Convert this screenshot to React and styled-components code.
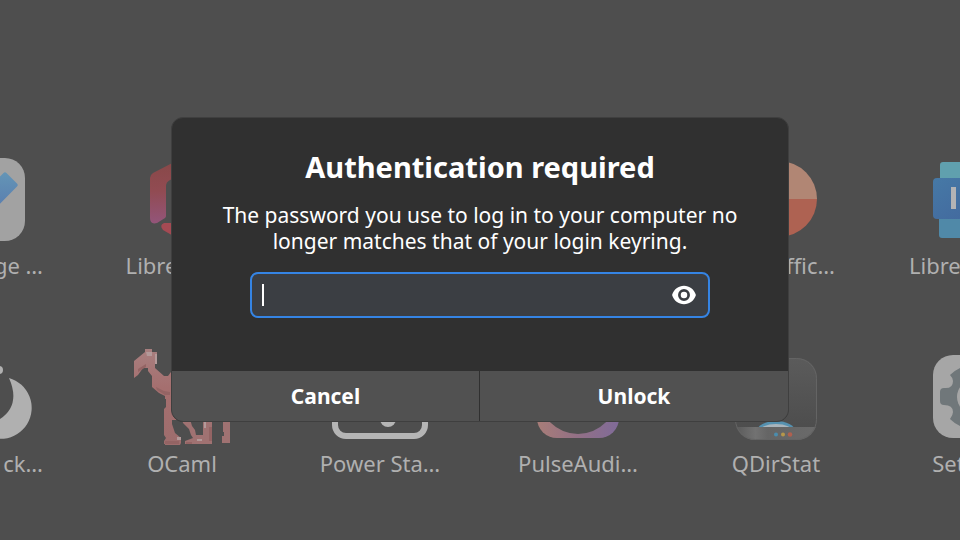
import React from "react";
import styled, { createGlobalStyle } from "styled-components";

const GlobalStyle = createGlobalStyle`
  *, *::before, *::after { box-sizing: border-box; }
  body {
    margin: 0;
    background: #4e4e4e;
    font-family: "Noto Sans", "Open Sans", sans-serif;
  }
`;

const Desktop = styled.main`
  display: grid;
  grid-template: minmax(100vh, auto) / minmax(0, 1fr);
  height: 100vh;
  overflow: hidden;
`;

const AppGrid = styled.section`
  grid-area: 1 / 1;
  display: grid;
  grid-template-columns: repeat(6, 198px);
  grid-auto-rows: 198px;
  justify-content: center;
  align-content: end;
  padding-right: 2px;
  margin-bottom: -7px;
`;

const AppTile = styled.a`
  display: flex;
  flex-direction: column;
  align-items: center;
  gap: 5px;
  color: #b0b0b0;
  text-decoration: none;
`;

const AppIcon = styled.svg`
  flex: none;
  width: 96px;
  height: 96px;
`;

const AppLabel = styled.span`
  align-self: ${(p) => (p.$align === "end" ? "stretch" : "center")};
  padding: 0 ${(p) => (p.$align === "end" ? 40 : 0)}px;
  text-align: ${(p) => p.$align || "center"};
  font-size: 22px;
  line-height: 26px;
  white-space: nowrap;
`;

const Overlay = styled.div`
  grid-area: 1 / 1;
  z-index: 1;
  display: flex;
  align-items: center;
  justify-content: center;
  padding-bottom: 1px;
`;

const Dialog = styled.form`
  width: 618px;
  max-width: 100%;
  border: 1px solid #3f3f3f;
  border-radius: 12px;
  overflow: hidden;
  background: #303030;
  color: #fff;
`;

const DialogBody = styled.div`
  display: flex;
  flex-direction: column;
  align-items: center;
  padding: 30px 48px 53px;
`;

const Title = styled.h1`
  margin: 0;
  font-size: 29px;
  font-weight: 700;
  line-height: 38px;
`;

const Message = styled.label`
  margin-top: 16px;
  font-size: 21px;
  line-height: 26px;
  text-align: center;
  text-wrap: balance;
  white-space: pre-line;
`;

const PasswordField = styled.div`
  display: flex;
  align-items: center;
  width: 460px;
  max-width: 100%;
  height: 46px;
  margin-top: 18px;
  padding: 0 11px 0 10px;
  border: 2px solid #3584e4;
  border-radius: 8px;
  background: #3b3e43;
`;

const Caret = styled.span`
  flex: none;
  width: 2px;
  height: 22px;
  background: #fff;
`;

const PasswordInput = styled.input`
  flex: 1;
  min-width: 0;
  padding: 0;
  border: 0;
  outline: 0;
  background: transparent;
  color: inherit;
  caret-color: transparent;
  font: inherit;
  font-size: 21px;
`;

const RevealButton = styled.button`
  display: flex;
  padding: 0;
  border: 0;
  background: transparent;
  color: inherit;
`;

const Actions = styled.div`
  display: grid;
  grid-template-columns: 1fr 1fr;
`;

const ActionButton = styled.button`
  height: 50px;
  padding: 0;
  border: 0;
  background: #515151;
  color: inherit;
  font: inherit;
  font-size: 21px;
  font-weight: 700;

  &:first-child { border-right: 1px solid #303030; }
`;

const EditorIcon = () => (
  <AppIcon viewBox="0 0 96 96" aria-hidden="true">
    <defs>
      <linearGradient id="pen" x1="0" y1="0" x2="0" y2="1">
        <stop offset="0" stopColor="#6495b6" />
        <stop offset="1" stopColor="#5779ae" />
      </linearGradient>
    </defs>
    <rect x="7" y="7" width="82" height="83" rx="20" fill="#a2a2a2" />
    <path d="M67.500 22q1.500-1.500 3 0l10.500 10.500q1.500 1.500 0 3L53 64 39 50Z" fill="url(#pen)" />
  </AppIcon>
);

const HexIcon = () => (
  <AppIcon viewBox="0 0 96 96" aria-hidden="true">
    <defs>
      <linearGradient id="hex" x1="0" y1="0" x2="0" y2="1">
        <stop offset="0" stopColor="#874847" />
        <stop offset=".5" stopColor="#914b52" />
        <stop offset="1" stopColor="#93557a" />
      </linearGradient>
    </defs>
    <path d="M16 27q0-3 3-5L48 7v17l-12 5q-4 2-4 6v30q0 1-1 2l-8 5q-7 2-7-5Z" fill="url(#hex)" />
    <path d="M30 72h18v18L29 79q-4-5 1-7Z" fill="#a44a53" />
  </AppIcon>
);

const PieIcon = () => (
  <AppIcon viewBox="0 0 96 96" aria-hidden="true">
    <path d="M13 48a38 38 0 0 1 76 0Z" fill="#b18674" />
    <path d="M13 48a38 38 0 0 0 76 0Z" fill="#ae6252" />
  </AppIcon>
);

const LayersIcon = () => (
  <AppIcon viewBox="0 0 96 96" aria-hidden="true">
    <defs>
      <linearGradient id="card" x1="0" y1="0" x2="1" y2="1">
        <stop offset="0" stopColor="#4679a6" />
        <stop offset="1" stopColor="#42659c" />
      </linearGradient>
    </defs>
    <rect x="14" y="11" width="60" height="40" rx="3" fill="#60a0ae" />
    <rect x="13" y="50" width="60" height="37" rx="3" fill="#5089a8" />
    <rect x="7" y="27" width="66" height="41" rx="4" fill="url(#card)" />
    <rect x="25" y="36" width="5" height="22" fill="#b3b3b5" />
  </AppIcon>
);

const MoonIcon = () => (
  <AppIcon viewBox="0 0 96 96" aria-hidden="true">
    <circle cx="63" cy="21" r="4" fill="#b0b0b0" />
    <path d="M73 29A31 31 0 1 1 42 80Q58 76 64 70Q85 56 73 29Z" fill="#b0b0b0" />
  </AppIcon>
);

const CamelIcon = () => (
  <AppIcon viewBox="0 0 96 96" aria-hidden="true">
    <defs>
      <linearGradient id="camel" x1="0" y1="0" x2="0" y2="1">
        <stop offset="0" stopColor="#a87f7f" />
        <stop offset=".4" stopColor="#a56f6f" />
        <stop offset="1" stopColor="#9d6d6d" />
      </linearGradient>
    </defs>
    <path fill="url(#camel)" d="M0 12 11 3V0h7v3h5v12h-2v4l9 8h4l3-4h23v48H38v4l3 9 6 5v5l-2 4H31v-3h-1v-3l2-3-2-3V60l2-2v-8h-1v-3l-6-3-7-6V27l-4-5v-3H9L4 26 0 29Z" />
    <path fill="#a07272" d="M48 70h8l2 7 3 4 1 5h7V70h9v15h-1v7h1v3H51v-3l8-3-2-3-2-6-6-6Z" />
    <path fill="#a07272" d="M89 70h7v24h-8v-7h2v-4h-1Z" />
    <path fill="#b39a9a" d="M12 3h6v4h-5ZM21 5h2v10h-2ZM43 88h4v3h-4ZM70 73h2v6h-2ZM63 90h5v2h-5Z" />
    <path fill="#946464" d="M4 20l8-5v3l-8 5ZM22 38l8 4 6 1v3h-5l-8-5ZM31 92h14v3H31ZM52 93h6v2h-6ZM75 78h3v14h-3Z" />
  </AppIcon>
);

const StatsIcon = () => (
  <AppIcon viewBox="0 0 96 96" aria-hidden="true">
    <rect x="3" y="9" width="90" height="78" rx="11" fill="none" stroke="#b5b5b5" strokeWidth="6" />
    <circle cx="56" cy="70" r="8" fill="#b5b5b5" />
  </AppIcon>
);

const VolumeIcon = () => (
  <AppIcon viewBox="0 0 96 96" aria-hidden="true">
    <defs>
      <linearGradient id="pulse" x1="0" y1="0" x2="1" y2="0">
        <stop offset="0" stopColor="#a87d78" />
        <stop offset=".5" stopColor="#927086" />
        <stop offset="1" stopColor="#806b99" />
      </linearGradient>
    </defs>
    <rect x="7" y="7" width="82" height="82" rx="20" fill="url(#pulse)" />
    <circle cx="48" cy="46" r="39" fill="#505050" />
  </AppIcon>
);

const DiskIcon = () => (
  <AppIcon viewBox="0 0 96 96" aria-hidden="true">
    <defs>
      <clipPath id="disk"><rect x="7" y="9" width="82" height="82" rx="20" /></clipPath>
      <linearGradient id="shade" x1="0" y1="0" x2="0" y2="1">
        <stop offset="0" stopColor="#5b5b5b" />
        <stop offset="1" stopColor="#4b4b4b" />
      </linearGradient>
      <linearGradient id="band" x1="0" y1="0" x2="1" y2="0">
        <stop offset="0" stopColor="#595959" />
        <stop offset=".25" stopColor="#727272" />
        <stop offset=".4" stopColor="#656565" />
        <stop offset="1" stopColor="#6a6a6a" />
      </linearGradient>
    </defs>
    <g clipPath="url(#disk)">
      <rect x="7" y="9" width="82" height="82" fill="url(#shade)" />
      <ellipse cx="48" cy="82" rx="19" ry="10" fill="#5591b0" />
      <ellipse cx="48" cy="83" rx="17" ry="8" fill="#a9b4bb" />
      <rect x="7" y="78" width="82" height="13" fill="url(#band)" />
    </g>
    <rect x="7.500" y="9.500" width="81" height="81" rx="20" fill="none" stroke="#646464" />
    <circle cx="48" cy="85.500" r="2" fill="#4b8dae" />
    <circle cx="55" cy="85.500" r="2" fill="#b6974a" />
    <circle cx="62" cy="85.500" r="2.300" fill="#b0604f" />
  </AppIcon>
);

const GearIcon = () => (
  <AppIcon viewBox="0 0 96 96" aria-hidden="true">
    <rect x="7" y="6" width="82" height="83" rx="20" fill="#a6a6a6" />
    <path d="M14 43q0-4 4-4 9 1 9-7 0-3-3-6 10-10 24-10v64q-14 0-24-10 3-4 3-7 0-7-9-7-4 0-4-4Z" fill="#70777a" />
    <circle cx="48" cy="48" r="17" fill="#a6a6a6" />
  </AppIcon>
);

const apps = [
  { id: "editor", label: "ge …", align: "end", Icon: EditorIcon },
  { id: "hex", label: "LibreOffice", Icon: HexIcon },
  null,
  null,
  { id: "pie", label: "LibreOffic…", Icon: PieIcon },
  { id: "layers", label: "LibreOffice…", Icon: LayersIcon },
  { id: "moon", label: "ck…", align: "end", Icon: MoonIcon },
  { id: "ocaml", label: "OCaml", Icon: CamelIcon },
  { id: "power", label: "Power Sta…", Icon: StatsIcon },
  { id: "pulse", label: "PulseAudi…", Icon: VolumeIcon },
  { id: "qdirstat", label: "QDirStat", Icon: DiskIcon },
  { id: "settings", label: "Settings", Icon: GearIcon },
];

export default function App() {
  return (
    <Desktop>
      <GlobalStyle />
      <AppGrid aria-label="Applications">
        {apps.map((app, i) =>
          app ? (
            <AppTile key={app.id} href={`#${app.id}`}>
              <app.Icon />
              <AppLabel $align={app.align}>{app.label}</AppLabel>
            </AppTile>
          ) : (
            <span key={i} />
          )
        )}
      </AppGrid>
      <Overlay>
        <Dialog role="dialog" aria-modal="true" aria-labelledby="title" onSubmit={(e) => e.preventDefault()}>
          <DialogBody>
            <Title id="title">Authentication required</Title>
            <Message htmlFor="password">
              {"The password you use to log in to your computer no\nlonger matches that of your login keyring."}
            </Message>
            <PasswordField>
              <Caret />
              <PasswordInput id="password" type="password" />
              <RevealButton type="button" aria-label="Show password">
                <svg width="26" height="26" viewBox="0 0 24 24" fill="currentColor" aria-hidden="true">
                  <path d="M12 3.500C7 3.500 2.500 6.800 1 12c1.500 5.200 6 8.500 11 8.500s9.500-3.300 11-8.500c-1.500-5.200-6-8.500-11-8.500Zm0 14a5.500 5.500 0 1 1 0-11 5.500 5.500 0 0 1 0 11Zm0-8.500a3 3 0 1 0 0 6 3 3 0 0 0 0-6Z" />
                </svg>
              </RevealButton>
            </PasswordField>
          </DialogBody>
          <Actions>
            <ActionButton type="button">Cancel</ActionButton>
            <ActionButton type="submit">Unlock</ActionButton>
          </Actions>
        </Dialog>
      </Overlay>
    </Desktop>
  );
}
